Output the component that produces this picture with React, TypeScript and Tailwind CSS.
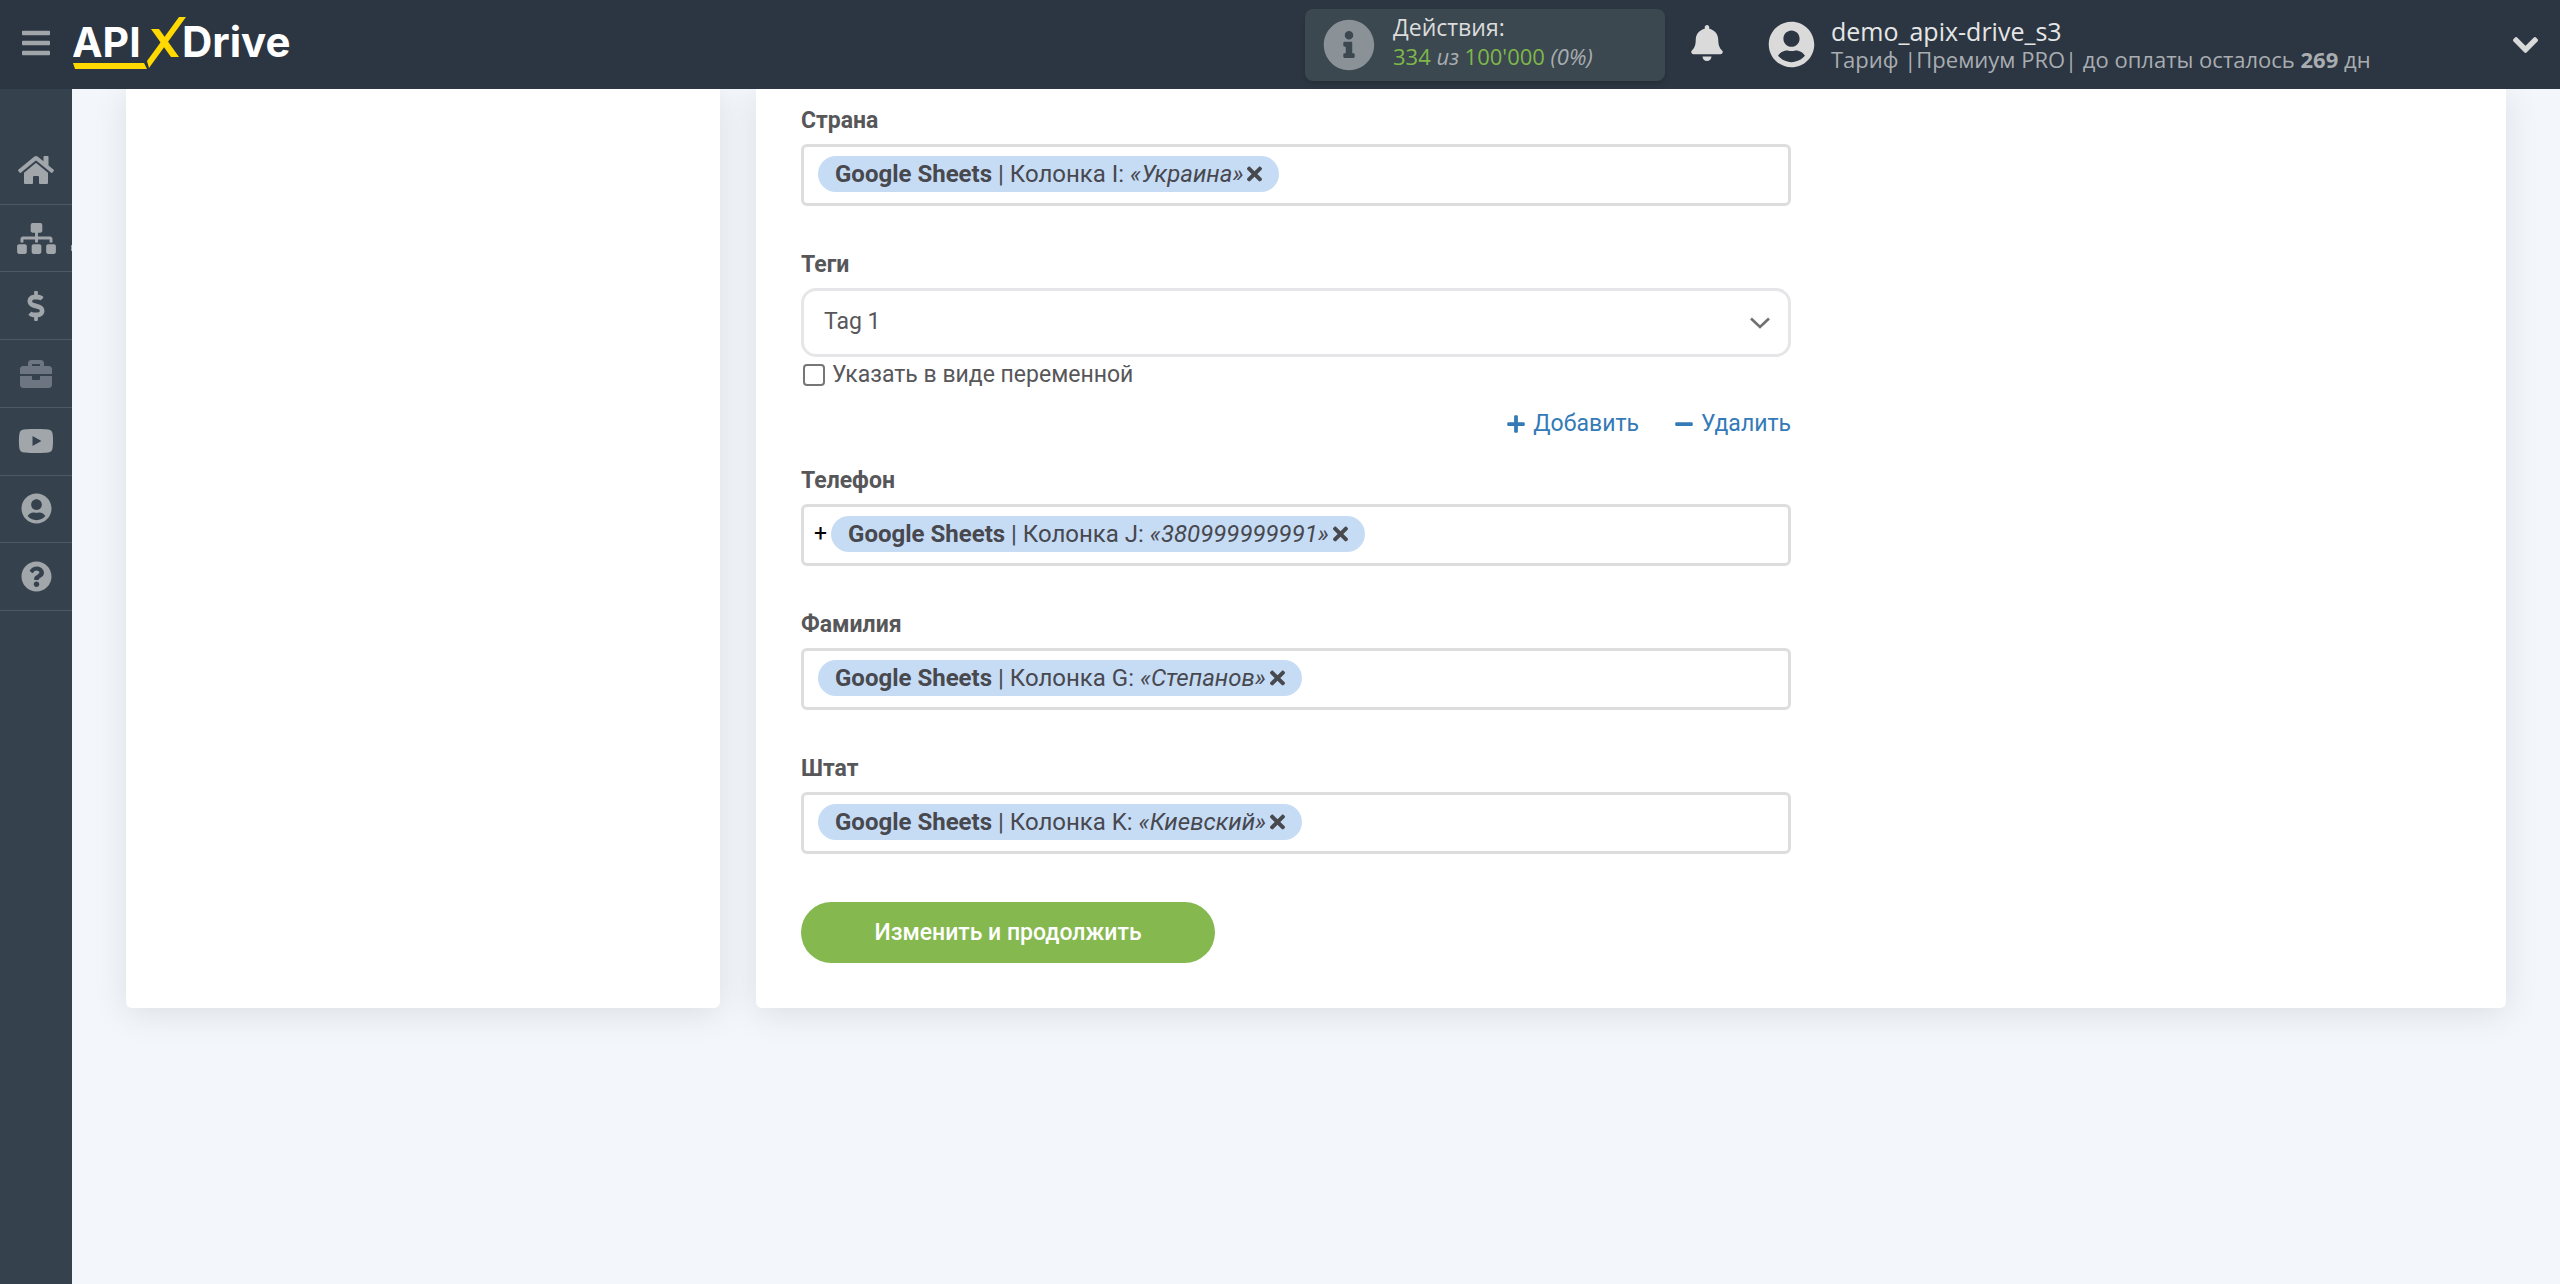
import { useState, type ReactNode } from 'react'
import {
  FaBars, FaBell, FaBriefcase, FaChevronDown, FaDollarSign, FaHome, FaInfoCircle,
  FaMinus, FaPlus, FaQuestionCircle, FaSitemap, FaTimes, FaUserCircle, FaYoutube,
} from 'react-icons/fa'

interface Chip {
  source: string
  column: string
  value: string
}

const NAV = [
  { label: 'Главная', icon: <FaHome className="w-9 h-8" /> },
  { label: 'Связи', icon: <FaSitemap className="w-[39px] h-[31px]" />, more: true },
  { label: 'Тарифы', icon: <FaDollarSign className="w-[18px] h-[30px]" /> },
  { label: 'Бизнес', icon: <FaBriefcase className="w-8 h-8 text-[#6d7680]" /> },
  { label: 'Видео', icon: <FaYoutube className="w-9 h-8" /> },
  { label: 'Профиль', icon: <FaUserCircle className="w-[31px] h-[31px]" /> },
  { label: 'Помощь', icon: <FaQuestionCircle className="w-[31px] h-[31px]" /> },
]

function Logo() {
  return (
    <svg viewBox="0 0 222 56" className="w-[222px] h-14" role="img" aria-label="ApiXDrive">
      <g fill="#ffffff" fontFamily="Inter, sans-serif" fontWeight="700">
        <text x="-1" y="40" fontSize="41">API</text>
        <text x="109" y="40" fontSize="42">Drive</text>
      </g>
      <g fill="#ffd900">
        <polygon points="78,12 86,12 106,40 98,40" />
        <polygon points="106,0 113,0 76,51 74,44" />
        <polygon points="0,46 71,46 74,52 2,52" />
      </g>
    </svg>
  )
}

function Header() {
  return (
    <header className="h-[89px] bg-[#2b3642] flex items-center px-[22px] font-['Open_Sans',sans-serif]">
      <button aria-label="Меню" className="pb-1 text-[#a0a5a9]"><FaBars className="w-7 h-8" /></button>
      <a href="#" className="ml-[23px]"><Logo /></a>

      <div className="ml-auto w-[360px] h-[72px] rounded-lg bg-[#3b4850] shadow-md flex items-center pl-[18px] gap-[18px]">
        <FaInfoCircle className="w-[52px] h-[52px] text-[#8a9197]" />
        <div className="text-[22px] leading-[29px] pb-1.5">
          <p className="text-[23px] text-[#dcdcdc]">Действия:</p>
          <p className="italic text-[#a9adb1]">
            <span className="not-italic text-[#7fb74a]">334</span> из <span className="not-italic text-[#7fb74a]">100'000</span> (0%)
          </p>
        </div>
      </div>

      <button aria-label="Уведомления" className="ml-[26px] pb-1 text-[#dadada]"><FaBell className="w-8 h-9" /></button>

      <button className="ml-[45px] w-[770px] flex items-center text-left">
        <FaUserCircle className="w-[47px] h-[47px] text-[#dadada]" />
        <span className="ml-4 flex-1 text-[22px] leading-7">
          <span className="block text-[25px] text-[#e6e6e6]">demo_apix-drive_s3</span>
          <span className="block text-[#a9adb1]">Тариф |Премиум PRO| до оплаты осталось <b>269</b> дн</span>
        </span>
        <FaChevronDown className="w-[25px] h-7 text-[#dadada] stroke-current stroke-[20]" />
      </button>
    </header>
  )
}

function Sidebar() {
  return (
    <nav className="w-[72px] shrink-0 bg-[#36414e] pt-12">
      <ul className="h-[474px] flex flex-col">
        {NAV.map((item) => (
          <li key={item.label} className="relative flex-1 border-b border-[#4c5863]">
            <a href="#" aria-label={item.label} className="h-full flex items-center justify-center text-[#a1a6aa]">{item.icon}</a>
            {item.more && <span className="absolute right-0 bottom-5 w-px h-1.5 bg-[#a1a6aa]" />}
          </li>
        ))}
      </ul>
    </nav>
  )
}

function Field({ id, label, children }: { id: string; label: string; children: ReactNode }) {
  return (
    <div>
      <label htmlFor={id} className="block mb-[7px] leading-8 font-bold text-[#57575a]">{label}</label>
      {children}
    </div>
  )
}

function ChipField({ id, label, prefix, chip }: { id: string; label: string; prefix?: string; chip: Chip }) {
  const [shown, setShown] = useState(true)
  return (
    <Field id={id} label={label}>
      <div className={`h-[62px] flex items-center border-[3px] border-[#dddddd] rounded-md pb-0.5 ${prefix ? 'pl-2.5' : 'pl-3.5'}`}>
        {prefix && <span className="mr-1 text-black">{prefix}</span>}
        {shown && (
          <span className="h-9 flex items-center rounded-[18px] bg-[#c6dcf5] px-[17px] text-2xl text-[#48484f] whitespace-pre">
            <b>{chip.source}</b> | {chip.column}: <i>«{chip.value}»</i>
            <button aria-label="Удалить значение" onClick={() => setShown(false)} className="ml-1">
              <FaTimes className="w-[15px] h-[22px]" />
            </button>
          </span>
        )}
        <input id={id} type="text" className="flex-1 min-w-0 h-full bg-transparent outline-none" />
      </div>
    </Field>
  )
}

export default function App() {
  const [tag, setTag] = useState('Tag 1')
  const [asVariable, setAsVariable] = useState(false)

  return (
    <div className="min-h-screen flex flex-col bg-[#f3f7fc] font-[Roboto,sans-serif] text-[23px] text-[#57575a]">
      <Header />
      <div className="flex-1 flex overflow-hidden">
        <Sidebar />
        <main className="flex-1 flex items-start gap-9 px-[54px]">
          <section className="w-[594px] shrink-0 self-stretch mb-[276px] rounded-b-md bg-white shadow-[0_5px_35px_rgba(0,0,0,0.1)]" />
          <section className="flex-1 mb-[276px] rounded-b-md bg-white shadow-[0_5px_35px_rgba(0,0,0,0.1)] px-[45px] pt-4 pb-[45px]">
            <form className="max-w-[990px]" onSubmit={(e) => e.preventDefault()}>
              <div className="flex flex-col gap-[43px]">
                <ChipField id="country" label="Страна" chip={{ source: 'Google Sheets', column: 'Колонка I', value: 'Украина' }} />
                <Field id="tags" label="Теги">
                  <div className="relative">
                    <select
                      id="tags" value={tag} onChange={(e) => setTag(e.target.value)}
                      className="block appearance-none w-full h-[69px] border-[3px] border-[#e6e6e8] rounded-[15px] bg-white px-5 outline-none"
                    >
                      <option>Tag 1</option>
                      <option>Tag 2</option>
                    </select>
                    <svg viewBox="0 0 20 12" className="absolute right-[21px] top-[29px] w-5 h-3 pointer-events-none" fill="none" stroke="#707070" strokeWidth="2.6">
                      <path d="M1 1.5l9 8.5 9-8.5" />
                    </svg>
                  </div>
                </Field>
              </div>

              <label className="h-9 flex items-center">
                <input
                  type="checkbox" checked={asVariable} onChange={(e) => setAsVariable(e.target.checked)}
                  className="appearance-none ml-0.5 mr-[7px] w-[22px] h-[22px] border-2 border-[#767676] rounded-[4px] bg-white checked:bg-[#337ab7]"
                />
                Указать в виде переменной
              </label>
              <div className="mt-3.5 mb-6 h-[34px] flex items-center justify-end gap-9 text-[#337ab7]">
                <button type="button" className="flex items-center gap-2"><FaPlus className="w-[18px] h-5" /> Добавить</button>
                <button type="button" className="flex items-center gap-2"><FaMinus className="w-[18px] h-5" /> Удалить</button>
              </div>

              <div className="flex flex-col gap-[43px]">
                <ChipField id="phone" label="Телефон" prefix="+" chip={{ source: 'Google Sheets', column: 'Колонка J', value: '380999999991' }} />
                <ChipField id="lastname" label="Фамилия" chip={{ source: 'Google Sheets', column: 'Колонка G', value: 'Степанов' }} />
                <ChipField id="state" label="Штат" chip={{ source: 'Google Sheets', column: 'Колонка K', value: 'Киевский' }} />
              </div>

              <button type="submit" className="mt-12 w-[414px] h-[61px] pt-0.5 rounded-full bg-[#85b84f] text-white font-medium">
                Изменить и продолжить
              </button>
            </form>
          </section>
        </main>
      </div>
    </div>
  )
}
